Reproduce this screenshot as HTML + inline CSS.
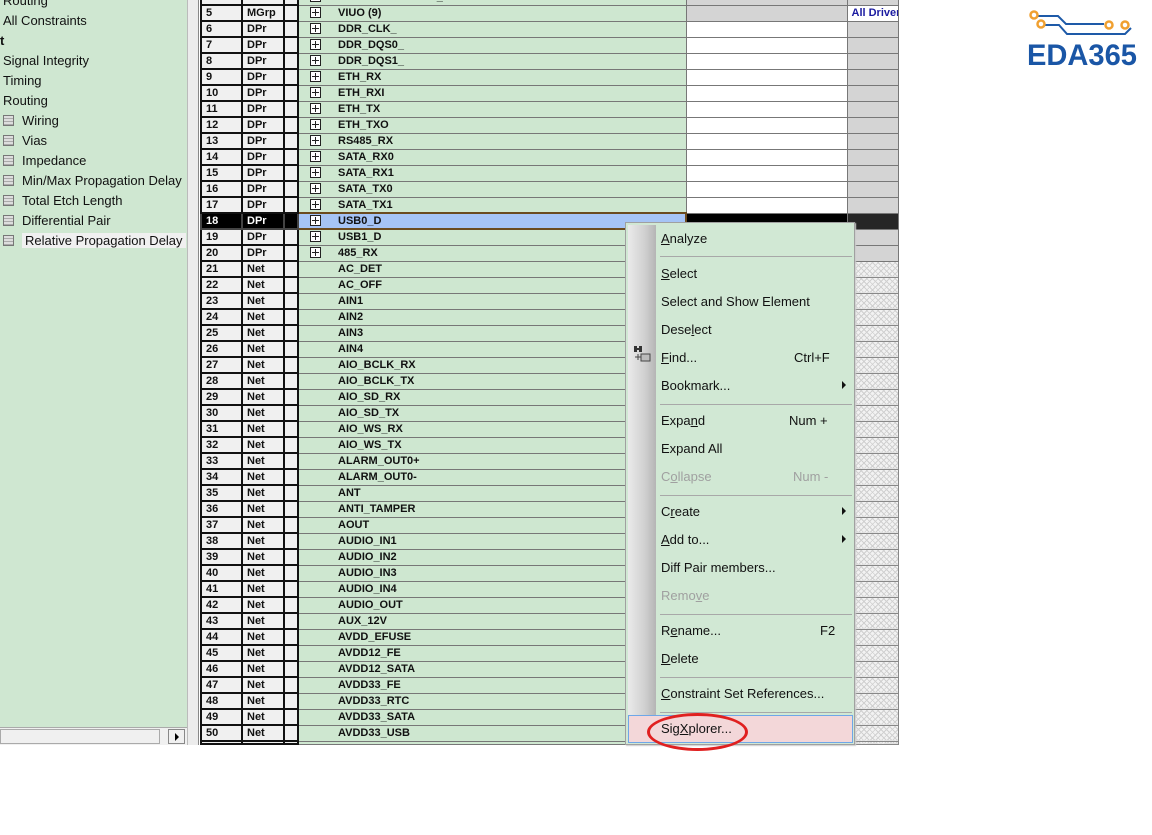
<!DOCTYPE html>
<html><head><meta charset="utf-8"><style>
*{margin:0;padding:0;box-sizing:border-box}
body{width:1152px;height:835px;background:#fff;position:relative;overflow:hidden;font-family:"Liberation Sans","Noto Sans CJK SC",sans-serif}
#left{position:absolute;left:0;top:0;width:187px;height:745px;background:#cfe7d1}
#left div{position:absolute;font-size:13px;color:#111;white-space:nowrap}
.ic{display:inline-block;width:11px;height:11px;border:1px solid #777;background:repeating-linear-gradient(0deg,#aaa 0 1px,#ddd 1px 3px);margin-right:8px;vertical-align:-1px}
#div{position:absolute;left:187px;top:0;width:12px;height:745px;background:#ececec;border-left:1px solid #bbb;border-right:1px solid #888}
#hs{position:absolute;left:0;top:727px;width:187px;height:18px;background:#f0f0f0;border-top:1px solid #aaa}
table{position:absolute;left:200px;top:-12px;border-collapse:collapse;table-layout:fixed;width:697px}
td{height:16px;padding:0 0 0 4px;font-size:11px;font-weight:bold;color:#111;white-space:nowrap;overflow:hidden;line-height:14px}
td.n{background:#f0f0f0;border:2px solid #111}
td.t{background:#f0f0f0;border:2px solid #111}
td.s{background:#f0f0f0;border:2px solid #111;padding:0}
td.m{background:#cee7d0;border:1px solid #777;padding-left:11px}
td.w{background:#fff;border:1px solid #777}
td.g{background:#d4d4d4;border:1px solid #777}
td.x{background-color:#f2f2f2;background-image:repeating-linear-gradient(45deg,transparent 0 3px,#d0d0d0 3px 4px),repeating-linear-gradient(-45deg,transparent 0 3px,#d0d0d0 3px 4px);border:1px solid #888}
.p{display:inline-block;width:11px;height:11px;border:1px solid #222;position:relative;vertical-align:-2px;margin-right:17px;background:#fff}
.p:before{content:"";position:absolute;left:1px;right:1px;top:4px;height:1px;background:#222}
.p:after{content:"";position:absolute;top:1px;bottom:1px;left:4px;width:1px;background:#222}
.sp{display:inline-block;width:28px}
tr.sel td.n,tr.sel td.t,tr.sel td.s{background:#000;color:#fff;border-color:#444}
tr.sel td.m{background:#a6c4f5;border:2px solid #6b4b1e}
tr.sel td.w{background:#000}
tr.sel td.g{background:#262626}
#menu{position:absolute;left:625px;top:222px;width:230px;height:523px;background:#d1e8d4;border:1px solid #a0a0a0;box-shadow:1px 1px 1px #ccc}
#gut{position:absolute;left:2px;top:2px;width:28px;height:517px;background:linear-gradient(90deg,#eaeaea,#d0d0d0 60%,#b5b5b5)}
#menu .i{position:absolute;left:35px;font-size:13px;color:#111;white-space:nowrap}
#menu .k{position:absolute;font-size:13px;color:#111}
#menu .d{color:#a0a0a0}
#menu .sep{position:absolute;left:34px;right:2px;height:1px;background:#a8a8a8}
#menu .ar{position:absolute;left:216px;width:0;height:0;border-left:4px solid #111;border-top:4px solid transparent;border-bottom:4px solid transparent}
#hl{position:absolute;left:2px;top:492px;width:225px;height:28px;background:#f3d7d9;border:1px solid #6ea7e8}
u{text-decoration:underline}
#ell{position:absolute;left:647px;top:713px;width:101px;height:38px;border:3px solid #e02020;border-radius:50%}
</style></head><body>
<div id="left">
<div style="left:3px;top:-7px">Routing</div>
<div style="left:3px;top:13px">All Constraints</div>
<div style="left:0;top:33px;font-weight:bold">t</div>
<div style="left:3px;top:53px">Signal Integrity</div>
<div style="left:3px;top:73px">Timing</div>
<div style="left:3px;top:93px">Routing</div>
<div style="left:3px;top:113px"><span class="ic"></span>Wiring</div>
<div style="left:3px;top:133px"><span class="ic"></span>Vias</div>
<div style="left:3px;top:153px"><span class="ic"></span>Impedance</div>
<div style="left:3px;top:173px"><span class="ic"></span>Min/Max Propagation Delay</div>
<div style="left:3px;top:193px"><span class="ic"></span>Total Etch Length</div>
<div style="left:3px;top:213px"><span class="ic"></span>Differential Pair</div>
<div style="left:3px;top:233px"><span class="ic"></span><span style="background:#f0f0f0;padding:0 3px">Relative Propagation Delay</span></div>
<div id="hs"><div style="position:absolute;left:0;top:1px;width:160px;height:15px;background:#f0f0f0;border:1px solid #aaa"></div><div style="position:absolute;left:168px;top:1px;width:17px;height:15px;background:#f0f0f0;border:1px solid #888"><div style="position:absolute;left:6px;top:3px;border-left:4px solid #000;border-top:4px solid transparent;border-bottom:4px solid transparent"></div></div></div>
</div>
<div id="div"></div>
<table>
<colgroup><col style="width:41px"><col style="width:42px"><col style="width:14px"><col style="width:388px"><col style="width:161px"><col style="width:51px"></colgroup>
<tr><td class="n">4</td><td class="t">DCn</td><td class="s"></td><td class="m"><span class="p"></span>LDTCYCTAELAMM_PXO</td><td class="g"></td><td class="g"></td></tr>
<tr><td class="n">5</td><td class="t">MGrp</td><td class="s"></td><td class="m"><span class="p"></span>VIUO (9)</td><td class="g"></td><td class="w" style="color:#1a1aa0">All Drivers</td></tr>
<tr><td class="n">6</td><td class="t">DPr</td><td class="s"></td><td class="m"><span class="p"></span>DDR_CLK_</td><td class="w"></td><td class="g"></td></tr>
<tr><td class="n">7</td><td class="t">DPr</td><td class="s"></td><td class="m"><span class="p"></span>DDR_DQS0_</td><td class="w"></td><td class="g"></td></tr>
<tr><td class="n">8</td><td class="t">DPr</td><td class="s"></td><td class="m"><span class="p"></span>DDR_DQS1_</td><td class="w"></td><td class="g"></td></tr>
<tr><td class="n">9</td><td class="t">DPr</td><td class="s"></td><td class="m"><span class="p"></span>ETH_RX</td><td class="w"></td><td class="g"></td></tr>
<tr><td class="n">10</td><td class="t">DPr</td><td class="s"></td><td class="m"><span class="p"></span>ETH_RXI</td><td class="w"></td><td class="g"></td></tr>
<tr><td class="n">11</td><td class="t">DPr</td><td class="s"></td><td class="m"><span class="p"></span>ETH_TX</td><td class="w"></td><td class="g"></td></tr>
<tr><td class="n">12</td><td class="t">DPr</td><td class="s"></td><td class="m"><span class="p"></span>ETH_TXO</td><td class="w"></td><td class="g"></td></tr>
<tr><td class="n">13</td><td class="t">DPr</td><td class="s"></td><td class="m"><span class="p"></span>RS485_RX</td><td class="w"></td><td class="g"></td></tr>
<tr><td class="n">14</td><td class="t">DPr</td><td class="s"></td><td class="m"><span class="p"></span>SATA_RX0</td><td class="w"></td><td class="g"></td></tr>
<tr><td class="n">15</td><td class="t">DPr</td><td class="s"></td><td class="m"><span class="p"></span>SATA_RX1</td><td class="w"></td><td class="g"></td></tr>
<tr><td class="n">16</td><td class="t">DPr</td><td class="s"></td><td class="m"><span class="p"></span>SATA_TX0</td><td class="w"></td><td class="g"></td></tr>
<tr><td class="n">17</td><td class="t">DPr</td><td class="s"></td><td class="m"><span class="p"></span>SATA_TX1</td><td class="w"></td><td class="g"></td></tr>
<tr class="sel"><td class="n">18</td><td class="t">DPr</td><td class="s"></td><td class="m"><span class="p"></span>USB0_D</td><td class="w"></td><td class="g"></td></tr>
<tr><td class="n">19</td><td class="t">DPr</td><td class="s"></td><td class="m"><span class="p"></span>USB1_D</td><td class="g"></td><td class="g"></td></tr>
<tr><td class="n">20</td><td class="t">DPr</td><td class="s"></td><td class="m"><span class="p"></span>485_RX</td><td class="g"></td><td class="g"></td></tr>
<tr><td class="n">21</td><td class="t">Net</td><td class="s"></td><td class="m"><span class="sp"></span>AC_DET</td><td class="x"></td><td class="x"></td></tr>
<tr><td class="n">22</td><td class="t">Net</td><td class="s"></td><td class="m"><span class="sp"></span>AC_OFF</td><td class="x"></td><td class="x"></td></tr>
<tr><td class="n">23</td><td class="t">Net</td><td class="s"></td><td class="m"><span class="sp"></span>AIN1</td><td class="x"></td><td class="x"></td></tr>
<tr><td class="n">24</td><td class="t">Net</td><td class="s"></td><td class="m"><span class="sp"></span>AIN2</td><td class="x"></td><td class="x"></td></tr>
<tr><td class="n">25</td><td class="t">Net</td><td class="s"></td><td class="m"><span class="sp"></span>AIN3</td><td class="x"></td><td class="x"></td></tr>
<tr><td class="n">26</td><td class="t">Net</td><td class="s"></td><td class="m"><span class="sp"></span>AIN4</td><td class="x"></td><td class="x"></td></tr>
<tr><td class="n">27</td><td class="t">Net</td><td class="s"></td><td class="m"><span class="sp"></span>AIO_BCLK_RX</td><td class="x"></td><td class="x"></td></tr>
<tr><td class="n">28</td><td class="t">Net</td><td class="s"></td><td class="m"><span class="sp"></span>AIO_BCLK_TX</td><td class="x"></td><td class="x"></td></tr>
<tr><td class="n">29</td><td class="t">Net</td><td class="s"></td><td class="m"><span class="sp"></span>AIO_SD_RX</td><td class="x"></td><td class="x"></td></tr>
<tr><td class="n">30</td><td class="t">Net</td><td class="s"></td><td class="m"><span class="sp"></span>AIO_SD_TX</td><td class="x"></td><td class="x"></td></tr>
<tr><td class="n">31</td><td class="t">Net</td><td class="s"></td><td class="m"><span class="sp"></span>AIO_WS_RX</td><td class="x"></td><td class="x"></td></tr>
<tr><td class="n">32</td><td class="t">Net</td><td class="s"></td><td class="m"><span class="sp"></span>AIO_WS_TX</td><td class="x"></td><td class="x"></td></tr>
<tr><td class="n">33</td><td class="t">Net</td><td class="s"></td><td class="m"><span class="sp"></span>ALARM_OUT0+</td><td class="x"></td><td class="x"></td></tr>
<tr><td class="n">34</td><td class="t">Net</td><td class="s"></td><td class="m"><span class="sp"></span>ALARM_OUT0-</td><td class="x"></td><td class="x"></td></tr>
<tr><td class="n">35</td><td class="t">Net</td><td class="s"></td><td class="m"><span class="sp"></span>ANT</td><td class="x"></td><td class="x"></td></tr>
<tr><td class="n">36</td><td class="t">Net</td><td class="s"></td><td class="m"><span class="sp"></span>ANTI_TAMPER</td><td class="x"></td><td class="x"></td></tr>
<tr><td class="n">37</td><td class="t">Net</td><td class="s"></td><td class="m"><span class="sp"></span>AOUT</td><td class="x"></td><td class="x"></td></tr>
<tr><td class="n">38</td><td class="t">Net</td><td class="s"></td><td class="m"><span class="sp"></span>AUDIO_IN1</td><td class="x"></td><td class="x"></td></tr>
<tr><td class="n">39</td><td class="t">Net</td><td class="s"></td><td class="m"><span class="sp"></span>AUDIO_IN2</td><td class="x"></td><td class="x"></td></tr>
<tr><td class="n">40</td><td class="t">Net</td><td class="s"></td><td class="m"><span class="sp"></span>AUDIO_IN3</td><td class="x"></td><td class="x"></td></tr>
<tr><td class="n">41</td><td class="t">Net</td><td class="s"></td><td class="m"><span class="sp"></span>AUDIO_IN4</td><td class="x"></td><td class="x"></td></tr>
<tr><td class="n">42</td><td class="t">Net</td><td class="s"></td><td class="m"><span class="sp"></span>AUDIO_OUT</td><td class="x"></td><td class="x"></td></tr>
<tr><td class="n">43</td><td class="t">Net</td><td class="s"></td><td class="m"><span class="sp"></span>AUX_12V</td><td class="x"></td><td class="x"></td></tr>
<tr><td class="n">44</td><td class="t">Net</td><td class="s"></td><td class="m"><span class="sp"></span>AVDD_EFUSE</td><td class="x"></td><td class="x"></td></tr>
<tr><td class="n">45</td><td class="t">Net</td><td class="s"></td><td class="m"><span class="sp"></span>AVDD12_FE</td><td class="x"></td><td class="x"></td></tr>
<tr><td class="n">46</td><td class="t">Net</td><td class="s"></td><td class="m"><span class="sp"></span>AVDD12_SATA</td><td class="x"></td><td class="x"></td></tr>
<tr><td class="n">47</td><td class="t">Net</td><td class="s"></td><td class="m"><span class="sp"></span>AVDD33_FE</td><td class="x"></td><td class="x"></td></tr>
<tr><td class="n">48</td><td class="t">Net</td><td class="s"></td><td class="m"><span class="sp"></span>AVDD33_RTC</td><td class="x"></td><td class="x"></td></tr>
<tr><td class="n">49</td><td class="t">Net</td><td class="s"></td><td class="m"><span class="sp"></span>AVDD33_SATA</td><td class="x"></td><td class="x"></td></tr>
<tr><td class="n">50</td><td class="t">Net</td><td class="s"></td><td class="m"><span class="sp"></span>AVDD33_USB</td><td class="x"></td><td class="x"></td></tr>
<tr style="height:3px"><td class="n" style="height:3px"></td><td class="t" style="height:3px"></td><td class="s" style="height:3px"></td><td class="m" style="height:3px"></td><td class="x" style="height:3px"></td><td class="x" style="height:3px"></td></tr>
</table>
<div id="menu">
<div id="gut"></div>
<div id="hl"></div>
<div class="i" style="top:8px"><u>A</u>nalyze</div>
<div class="sep" style="top:33px"></div>
<div class="i" style="top:43px"><u>S</u>elect</div>
<div class="i" style="top:71px">Select and Show Element</div>
<div class="i" style="top:99px">Dese<u>l</u>ect</div>
<div style="position:absolute;left:7px;top:122px;width:18px;height:18px"><svg width="18" height="18"><rect x="1" y="1" width="3" height="6" fill="#333"/><rect x="6" y="1" width="3" height="6" fill="#333"/><rect x="3" y="3" width="4" height="2" fill="#333"/><rect x="8" y="9" width="9" height="7" fill="#bbb" stroke="#444"/><path d="M5 9v6M2 12h6" stroke="#444"/></svg></div>
<div class="i" style="top:127px"><u>F</u>ind...</div><div class="k" style="left:168px;top:127px">Ctrl+F</div>
<div class="i" style="top:155px">Bookmark...</div><div class="ar" style="top:158px"></div>
<div class="sep" style="top:181px"></div>
<div class="i" style="top:190px">Expa<u>n</u>d</div><div class="k" style="left:163px;top:190px">Num +</div>
<div class="i" style="top:218px">Expand All</div>
<div class="i d" style="top:246px">C<u>o</u>llapse</div><div class="k d" style="left:167px;top:246px">Num -</div>
<div class="sep" style="top:272px"></div>
<div class="i" style="top:281px">C<u>r</u>eate</div><div class="ar" style="top:284px"></div>
<div class="i" style="top:309px"><u>A</u>dd to...</div><div class="ar" style="top:312px"></div>
<div class="i" style="top:337px">Diff Pair members...</div>
<div class="i d" style="top:365px">Remo<u>v</u>e</div>
<div class="sep" style="top:391px"></div>
<div class="i" style="top:400px">R<u>e</u>name...</div><div class="k" style="left:194px;top:400px">F2</div>
<div class="i" style="top:428px"><u>D</u>elete</div>
<div class="sep" style="top:454px"></div>
<div class="i" style="top:463px"><u>C</u>onstraint Set References...</div>
<div class="sep" style="top:489px"></div>
<div class="i" style="top:498px">Sig<u>X</u>plorer...</div>
</div>
<div id="ell"></div>
<svg style="position:absolute;left:1025px;top:8px" width="120" height="60">
<path d="M9 8h24l8 8h38M14 17h20l8 9h58l6-6" fill="none" stroke="#1e5aa8" stroke-width="2"/>
<circle cx="9" cy="7" r="3.5" fill="#fff" stroke="#f0a030" stroke-width="2.5"/>
<circle cx="16" cy="16" r="3.5" fill="#fff" stroke="#f0a030" stroke-width="2.5"/>
<circle cx="84" cy="17" r="3.5" fill="#fff" stroke="#f0a030" stroke-width="2.5"/>
<circle cx="100" cy="17" r="3.5" fill="#fff" stroke="#f0a030" stroke-width="2.5"/>
<text x="2" y="57" font-family="Liberation Sans,sans-serif" font-size="30" font-weight="bold" fill="#1a56a6" textLength="110" lengthAdjust="spacingAndGlyphs">EDA365</text>
</svg>
</body></html>
